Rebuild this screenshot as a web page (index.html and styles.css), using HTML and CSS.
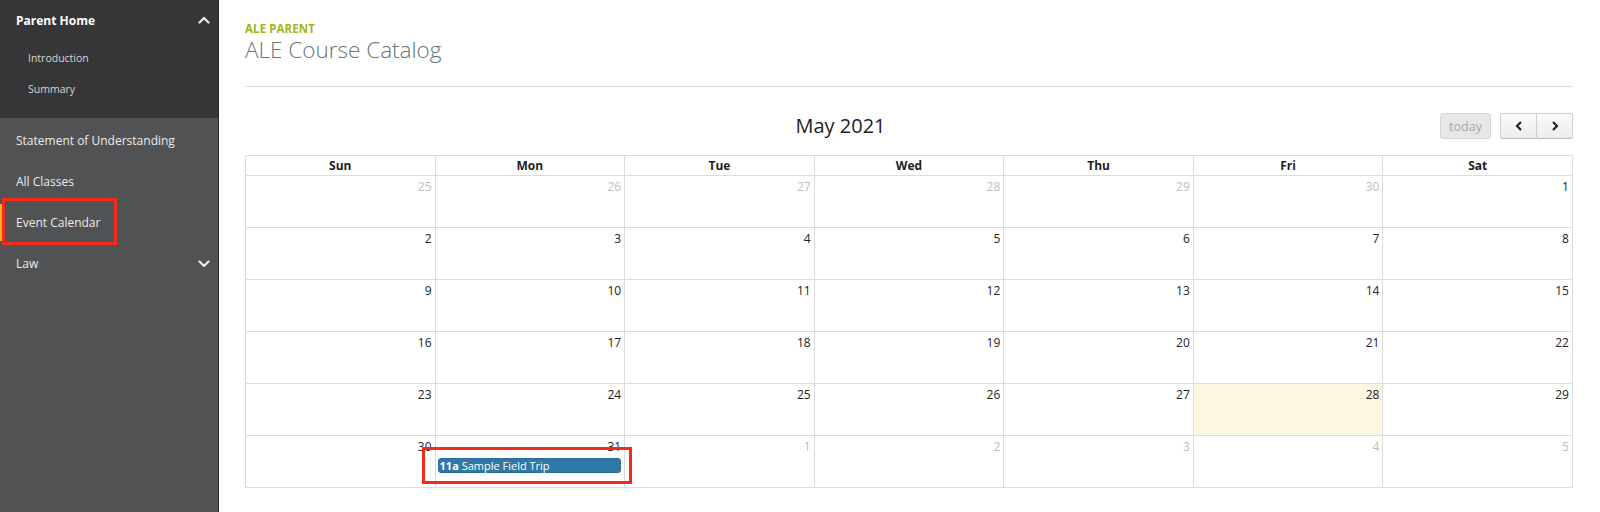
FILE: index.html
```html
<!DOCTYPE html>
<html lang="en">
<head>
<meta charset="utf-8">
<title>ALE Course Catalog</title>
<link rel="stylesheet" href="styles.css">
</head>
<body>
<div class="app">
  <nav class="sidebar">
    <div class="nav-group">
      <div class="nav-head">
        <span>Parent Home</span>
        <svg class="chev" width="12" height="8" viewBox="0 0 12 8"><polyline points="1.5,6.5 6,2 10.5,6.5" fill="none" stroke="#ececec" stroke-width="2.2" stroke-linecap="round" stroke-linejoin="round"/></svg>
      </div>
      <ul class="nav-sub">
        <li>Introduction</li>
        <li>Summary</li>
      </ul>
    </div>
    <ul class="nav-main">
      <li>Statement of Understanding</li>
      <li>All Classes</li>
      <li class="active">Event Calendar<span class="annot annot-nav"></span></li>
      <li class="has-sub"><span>Law</span>
        <svg class="chev" width="12" height="8" viewBox="0 0 12 8"><polyline points="1.5,1.5 6,6 10.5,1.5" fill="none" stroke="#ececec" stroke-width="2.2" stroke-linecap="round" stroke-linejoin="round"/></svg>
      </li>
    </ul>
  </nav>

  <main class="content">
    <header class="page-head">
      <div class="eyebrow">ALE PARENT</div>
      <h1 class="page-title">ALE Course Catalog</h1>
    </header>
    <hr class="rule">

    <section class="calendar">
      <div class="toolbar">
        <div class="cal-title">May 2021</div>
        <div class="cal-buttons">
          <button class="btn btn-today" disabled>today</button>
          <div class="btn-group">
            <button class="btn btn-nav" aria-label="prev"><svg width="8" height="10" viewBox="0 0 8 10"><polyline points="6,1 2,5 6,9" fill="none" stroke="#222" stroke-width="2.2"/></svg></button>
            <button class="btn btn-nav" aria-label="next"><svg width="8" height="10" viewBox="0 0 8 10"><polyline points="2,1 6,5 2,9" fill="none" stroke="#222" stroke-width="2.2"/></svg></button>
          </div>
        </div>
      </div>

      <div class="cal-grid">
        <div class="head">Sun</div><div class="head">Mon</div><div class="head">Tue</div><div class="head">Wed</div><div class="head">Thu</div><div class="head">Fri</div><div class="head">Sat</div>

        <div class="day other"><div class="num">25</div></div>
        <div class="day other"><div class="num">26</div></div>
        <div class="day other"><div class="num">27</div></div>
        <div class="day other"><div class="num">28</div></div>
        <div class="day other"><div class="num">29</div></div>
        <div class="day other"><div class="num">30</div></div>
        <div class="day"><div class="num">1</div></div>

        <div class="day"><div class="num">2</div></div>
        <div class="day"><div class="num">3</div></div>
        <div class="day"><div class="num">4</div></div>
        <div class="day"><div class="num">5</div></div>
        <div class="day"><div class="num">6</div></div>
        <div class="day"><div class="num">7</div></div>
        <div class="day"><div class="num">8</div></div>

        <div class="day"><div class="num">9</div></div>
        <div class="day"><div class="num">10</div></div>
        <div class="day"><div class="num">11</div></div>
        <div class="day"><div class="num">12</div></div>
        <div class="day"><div class="num">13</div></div>
        <div class="day"><div class="num">14</div></div>
        <div class="day"><div class="num">15</div></div>

        <div class="day"><div class="num">16</div></div>
        <div class="day"><div class="num">17</div></div>
        <div class="day"><div class="num">18</div></div>
        <div class="day"><div class="num">19</div></div>
        <div class="day"><div class="num">20</div></div>
        <div class="day"><div class="num">21</div></div>
        <div class="day"><div class="num">22</div></div>

        <div class="day"><div class="num">23</div></div>
        <div class="day"><div class="num">24</div></div>
        <div class="day"><div class="num">25</div></div>
        <div class="day"><div class="num">26</div></div>
        <div class="day"><div class="num">27</div></div>
        <div class="day today"><div class="num">28</div></div>
        <div class="day"><div class="num">29</div></div>

        <div class="day"><div class="num">30</div></div>
        <div class="day"><div class="num">31</div>
          <div class="event"><b>11a</b>&nbsp;Sample Field Trip<span class="annot annot-event"></span></div>
        </div>
        <div class="day other"><div class="num">1</div></div>
        <div class="day other"><div class="num">2</div></div>
        <div class="day other"><div class="num">3</div></div>
        <div class="day other"><div class="num">4</div></div>
        <div class="day other"><div class="num">5</div></div>
      </div>
    </section>
  </main>
</div>
</body>
</html>
```

FILE: styles.css
```css
* { box-sizing: border-box; }

html, body {
  margin: 0;
  padding: 0;
  background: #fff;
  font-family: "Open Sans", "DejaVu Sans", sans-serif;
  color: #222;
}

.app {
  display: flex;
  min-height: 100vh;
}

/* Sidebar */
.sidebar {
  width: 219px;
  flex: 0 0 219px;
  background: #515254;
  border-right: 1px solid #262627;
  color: #e8e8e8;
}

.nav-group {
  background: #363638;
  height: 118px;
}

.nav-head {
  height: 40px;
  display: flex;
  align-items: center;
  justify-content: space-between;
  padding: 0 8px 0 16px;
  font-size: 12px;
  font-weight: 700;
  color: #fff;
}

.chev { display: block; }

.nav-sub {
  list-style: none;
  margin: 0;
  padding: 3px 0 0 0;
}

.nav-sub li {
  height: 31px;
  line-height: 31px;
  padding-left: 28px;
  font-size: 10.5px;
  color: #d6d6d6;
}

.nav-main {
  list-style: none;
  margin: 0;
  padding: 2px 0 0 0;
}

.nav-main li {
  position: relative;
  height: 41px;
  display: flex;
  align-items: center;
  justify-content: space-between;
  padding: 0 8px 0 16px;
  font-size: 12px;
  color: #ececec;
}

.nav-main li.active::before {
  content: "";
  position: absolute;
  left: 0;
  top: 2px;
  bottom: 2px;
  width: 3px;
  background: #e6b41e;
}

.annot {
  position: absolute;
  border: 3px solid #f42a1c;
  pointer-events: none;
}

.annot-nav {
  left: 2px;
  top: -4px;
  width: 115px;
  height: 47px;
}

/* Content */
.content {
  flex: 1;
  padding: 22px 27px 0 26px;
}

.eyebrow {
  font-size: 11.5px;
  font-weight: 700;
  line-height: 14px;
  color: #a2b320;
  letter-spacing: 0.1px;
}

.page-title {
  margin: 0;
  font-size: 22.5px;
  font-weight: 300;
  line-height: 28px;
  color: #66767b;
}

.rule {
  margin: 22px 0 0 0;
  border: 0;
  border-top: 1px solid #dedede;
  height: 0;
}

/* Calendar */
.calendar {
  margin-top: 26px;
}

.toolbar {
  display: flex;
  align-items: center;
  height: 26px;
}

.cal-title {
  flex: 1;
  text-align: center;
  font-size: 20px;
  line-height: 26px;
  color: #1e1e1e;
  padding-right: 4px;
}

.cal-buttons {
  display: flex;
  align-items: center;
  gap: 9px;
}

.btn {
  font-family: inherit;
  height: 26px;
  margin: 0;
  padding: 0;
  border: 1px solid #cfcfcf;
  border-bottom-color: #b8b8b8;
  border-radius: 3px;
  display: flex;
  align-items: center;
  justify-content: center;
}

.btn-today {
  width: 51px;
  font-size: 12.5px;
  color: #a8a8a8;
  background: #e7e7e7;
  border-color: #d6d6d6;
}

.btn-group {
  display: flex;
}

.btn-nav {
  width: 37px;
  background: linear-gradient(#fcfcfc, #ececec);
}

.btn-group .btn-nav:first-child {
  border-radius: 3px 0 0 3px;
}

.btn-group .btn-nav:last-child {
  border-radius: 0 3px 3px 0;
  border-left: 0;
  width: 36px;
}

.cal-grid {
  margin-top: 16px;
  display: grid;
  grid-template-columns: repeat(7, 1fr);
  grid-template-rows: 20px repeat(6, 52px);
  border-top: 1px solid #dcdcdc;
  border-left: 1px solid #dcdcdc;
}

.head {
  border-right: 1px solid #dcdcdc;
  border-bottom: 1px solid #dcdcdc;
  text-align: center;
  font-size: 12px;
  font-weight: 700;
  line-height: 19px;
  color: #1e1e1e;
}

.day {
  border-right: 1px solid #dcdcdc;
  border-bottom: 1px solid #dcdcdc;
  min-width: 0;
}

.day.today {
  background: #fcf7e1;
}

.num {
  text-align: right;
  padding: 2px 3px 0 0;
  font-size: 12px;
  line-height: 18px;
  color: #222;
}

.day.other .num {
  color: #bdbdbd;
}

.event {
  position: relative;
  margin: 2px 3px 0 2px;
  height: 15px;
  background: #2f79a6;
  border: 1px solid #2a6e98;
  border-radius: 3px;
  color: #fff;
  font-size: 11px;
  line-height: 13px;
  padding: 0 1px;
  white-space: nowrap;
}

.event b { font-weight: 700; }

.annot-event {
  left: -17px;
  top: -12px;
  width: 210px;
  height: 37px;
}
```
